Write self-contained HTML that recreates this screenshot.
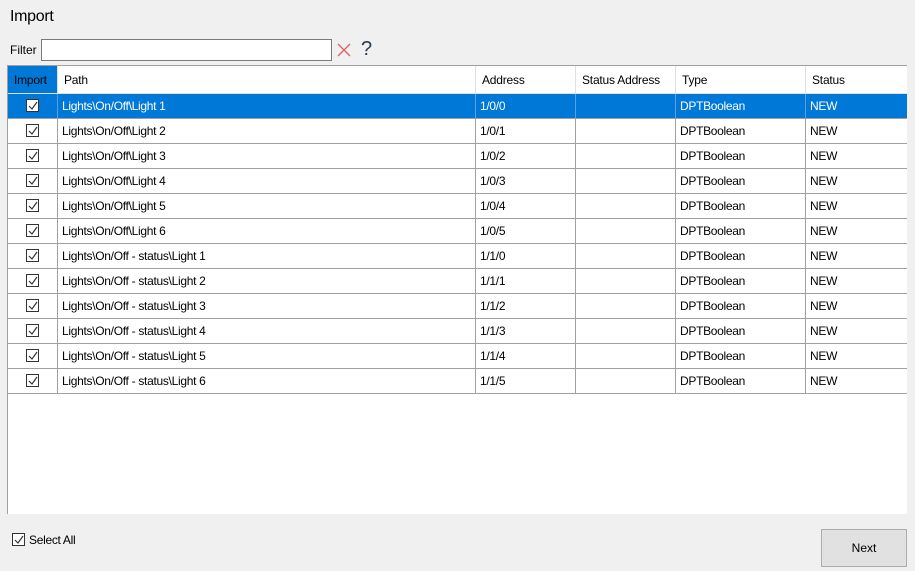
<!DOCTYPE html>
<html><head><meta charset="utf-8"><style>
*{margin:0;padding:0;box-sizing:border-box}
body{width:915px;height:571px;background:#f0f0f0;font-family:"Liberation Sans",sans-serif;font-size:12px;color:#000;position:relative;overflow:hidden}
.a{position:absolute}
.grid{left:7px;top:65px;width:900px;height:449px;background:#fff;border-left:1px solid #a0a0a0;border-top:1px solid #a0a0a0}
.hdr{position:absolute;top:0;height:28px;line-height:28px;padding-left:6px;border-right:1px solid #e0e0e0;border-bottom:1px solid #e0e0e0;font-size:12px;letter-spacing:-0.2px}
.row{position:absolute;left:0;width:899px;height:25px;border-bottom:1px solid #a0a0a0}
.row.sel{background:#0078d7;color:#fff}
.c{position:absolute;top:0;height:24px;line-height:24px;padding-left:4px;border-right:1px solid #a0a0a0;font-size:12px;letter-spacing:-0.3px;white-space:nowrap}
.row.sel .c{border-right-color:#5aa0e0}
.cb{position:absolute;left:18px;top:5px;width:13px;height:13px;background:#fff;border:1px solid #333}
.cb svg{position:absolute;left:1px;top:1px}
</style></head><body>
<div class="a" style="left:10px;top:8px;font-size:16px;letter-spacing:-0.3px">Import</div>
<div class="a" style="left:10px;top:43px;font-size:12px">Filter</div>
<div class="a" style="left:41px;top:39px;width:291px;height:22px;background:#fff;border:1px solid #7a7a7a"></div>
<svg class="a" style="left:336px;top:42px" width="16" height="16"><path d="M2 2L14 14M14 2L2 14" stroke="#e06060" stroke-width="1.3"/></svg>
<div class="a" style="left:361px;top:38px;font-size:20px;color:#2b3a4a">?</div>
<div class="a grid">
<div class="hdr" style="left:0;width:50px;background:#0078d7">Import</div>
<div class="hdr" style="left:50px;width:418px">Path</div>
<div class="hdr" style="left:468px;width:100px">Address</div>
<div class="hdr" style="left:568px;width:100px">Status Address</div>
<div class="hdr" style="left:668px;width:130px">Type</div>
<div class="hdr" style="left:798px;width:101px;border-right:none">Status</div>

<div class="row sel" style="top:28px"><div class="c" style="left:0;width:50px"><div class="cb"><svg width="10" height="10"><path d="M1 5L4 8L9 1" stroke="#333" stroke-width="1.2" fill="none"/></svg></div></div><div class="c" style="left:50px;width:418px">Lights\On/Off\Light 1</div><div class="c" style="left:468px;width:100px">1/0/0</div><div class="c" style="left:568px;width:100px"></div><div class="c" style="left:668px;width:130px">DPTBoolean</div><div class="c" style="left:798px;width:101px;border-right:none">NEW</div></div>
<div class="row" style="top:53px"><div class="c" style="left:0;width:50px"><div class="cb"><svg width="10" height="10"><path d="M1 5L4 8L9 1" stroke="#333" stroke-width="1.2" fill="none"/></svg></div></div><div class="c" style="left:50px;width:418px">Lights\On/Off\Light 2</div><div class="c" style="left:468px;width:100px">1/0/1</div><div class="c" style="left:568px;width:100px"></div><div class="c" style="left:668px;width:130px">DPTBoolean</div><div class="c" style="left:798px;width:101px;border-right:none">NEW</div></div>
<div class="row" style="top:78px"><div class="c" style="left:0;width:50px"><div class="cb"><svg width="10" height="10"><path d="M1 5L4 8L9 1" stroke="#333" stroke-width="1.2" fill="none"/></svg></div></div><div class="c" style="left:50px;width:418px">Lights\On/Off\Light 3</div><div class="c" style="left:468px;width:100px">1/0/2</div><div class="c" style="left:568px;width:100px"></div><div class="c" style="left:668px;width:130px">DPTBoolean</div><div class="c" style="left:798px;width:101px;border-right:none">NEW</div></div>
<div class="row" style="top:103px"><div class="c" style="left:0;width:50px"><div class="cb"><svg width="10" height="10"><path d="M1 5L4 8L9 1" stroke="#333" stroke-width="1.2" fill="none"/></svg></div></div><div class="c" style="left:50px;width:418px">Lights\On/Off\Light 4</div><div class="c" style="left:468px;width:100px">1/0/3</div><div class="c" style="left:568px;width:100px"></div><div class="c" style="left:668px;width:130px">DPTBoolean</div><div class="c" style="left:798px;width:101px;border-right:none">NEW</div></div>
<div class="row" style="top:128px"><div class="c" style="left:0;width:50px"><div class="cb"><svg width="10" height="10"><path d="M1 5L4 8L9 1" stroke="#333" stroke-width="1.2" fill="none"/></svg></div></div><div class="c" style="left:50px;width:418px">Lights\On/Off\Light 5</div><div class="c" style="left:468px;width:100px">1/0/4</div><div class="c" style="left:568px;width:100px"></div><div class="c" style="left:668px;width:130px">DPTBoolean</div><div class="c" style="left:798px;width:101px;border-right:none">NEW</div></div>
<div class="row" style="top:153px"><div class="c" style="left:0;width:50px"><div class="cb"><svg width="10" height="10"><path d="M1 5L4 8L9 1" stroke="#333" stroke-width="1.2" fill="none"/></svg></div></div><div class="c" style="left:50px;width:418px">Lights\On/Off\Light 6</div><div class="c" style="left:468px;width:100px">1/0/5</div><div class="c" style="left:568px;width:100px"></div><div class="c" style="left:668px;width:130px">DPTBoolean</div><div class="c" style="left:798px;width:101px;border-right:none">NEW</div></div>
<div class="row" style="top:178px"><div class="c" style="left:0;width:50px"><div class="cb"><svg width="10" height="10"><path d="M1 5L4 8L9 1" stroke="#333" stroke-width="1.2" fill="none"/></svg></div></div><div class="c" style="left:50px;width:418px">Lights\On/Off - status\Light 1</div><div class="c" style="left:468px;width:100px">1/1/0</div><div class="c" style="left:568px;width:100px"></div><div class="c" style="left:668px;width:130px">DPTBoolean</div><div class="c" style="left:798px;width:101px;border-right:none">NEW</div></div>
<div class="row" style="top:203px"><div class="c" style="left:0;width:50px"><div class="cb"><svg width="10" height="10"><path d="M1 5L4 8L9 1" stroke="#333" stroke-width="1.2" fill="none"/></svg></div></div><div class="c" style="left:50px;width:418px">Lights\On/Off - status\Light 2</div><div class="c" style="left:468px;width:100px">1/1/1</div><div class="c" style="left:568px;width:100px"></div><div class="c" style="left:668px;width:130px">DPTBoolean</div><div class="c" style="left:798px;width:101px;border-right:none">NEW</div></div>
<div class="row" style="top:228px"><div class="c" style="left:0;width:50px"><div class="cb"><svg width="10" height="10"><path d="M1 5L4 8L9 1" stroke="#333" stroke-width="1.2" fill="none"/></svg></div></div><div class="c" style="left:50px;width:418px">Lights\On/Off - status\Light 3</div><div class="c" style="left:468px;width:100px">1/1/2</div><div class="c" style="left:568px;width:100px"></div><div class="c" style="left:668px;width:130px">DPTBoolean</div><div class="c" style="left:798px;width:101px;border-right:none">NEW</div></div>
<div class="row" style="top:253px"><div class="c" style="left:0;width:50px"><div class="cb"><svg width="10" height="10"><path d="M1 5L4 8L9 1" stroke="#333" stroke-width="1.2" fill="none"/></svg></div></div><div class="c" style="left:50px;width:418px">Lights\On/Off - status\Light 4</div><div class="c" style="left:468px;width:100px">1/1/3</div><div class="c" style="left:568px;width:100px"></div><div class="c" style="left:668px;width:130px">DPTBoolean</div><div class="c" style="left:798px;width:101px;border-right:none">NEW</div></div>
<div class="row" style="top:278px"><div class="c" style="left:0;width:50px"><div class="cb"><svg width="10" height="10"><path d="M1 5L4 8L9 1" stroke="#333" stroke-width="1.2" fill="none"/></svg></div></div><div class="c" style="left:50px;width:418px">Lights\On/Off - status\Light 5</div><div class="c" style="left:468px;width:100px">1/1/4</div><div class="c" style="left:568px;width:100px"></div><div class="c" style="left:668px;width:130px">DPTBoolean</div><div class="c" style="left:798px;width:101px;border-right:none">NEW</div></div>
<div class="row" style="top:303px"><div class="c" style="left:0;width:50px"><div class="cb"><svg width="10" height="10"><path d="M1 5L4 8L9 1" stroke="#333" stroke-width="1.2" fill="none"/></svg></div></div><div class="c" style="left:50px;width:418px">Lights\On/Off - status\Light 6</div><div class="c" style="left:468px;width:100px">1/1/5</div><div class="c" style="left:568px;width:100px"></div><div class="c" style="left:668px;width:130px">DPTBoolean</div><div class="c" style="left:798px;width:101px;border-right:none">NEW</div></div>
</div>
<div class="a" style="left:12px;top:533px;width:13px;height:13px;border:1px solid #333;background:#fff"><svg style="position:absolute;left:1px;top:1px" width="10" height="10"><path d="M1 5L4 8L9 1" stroke="#333" stroke-width="1.2" fill="none"/></svg></div>
<div class="a" style="left:29px;top:533px;font-size:12px;letter-spacing:-0.3px">Select All</div>
<div class="a" style="left:821px;top:529px;width:86px;height:38px;background:#e1e1e1;border:1px solid #adadad;text-align:center;line-height:36px;font-size:12px">Next</div>
</body></html>
